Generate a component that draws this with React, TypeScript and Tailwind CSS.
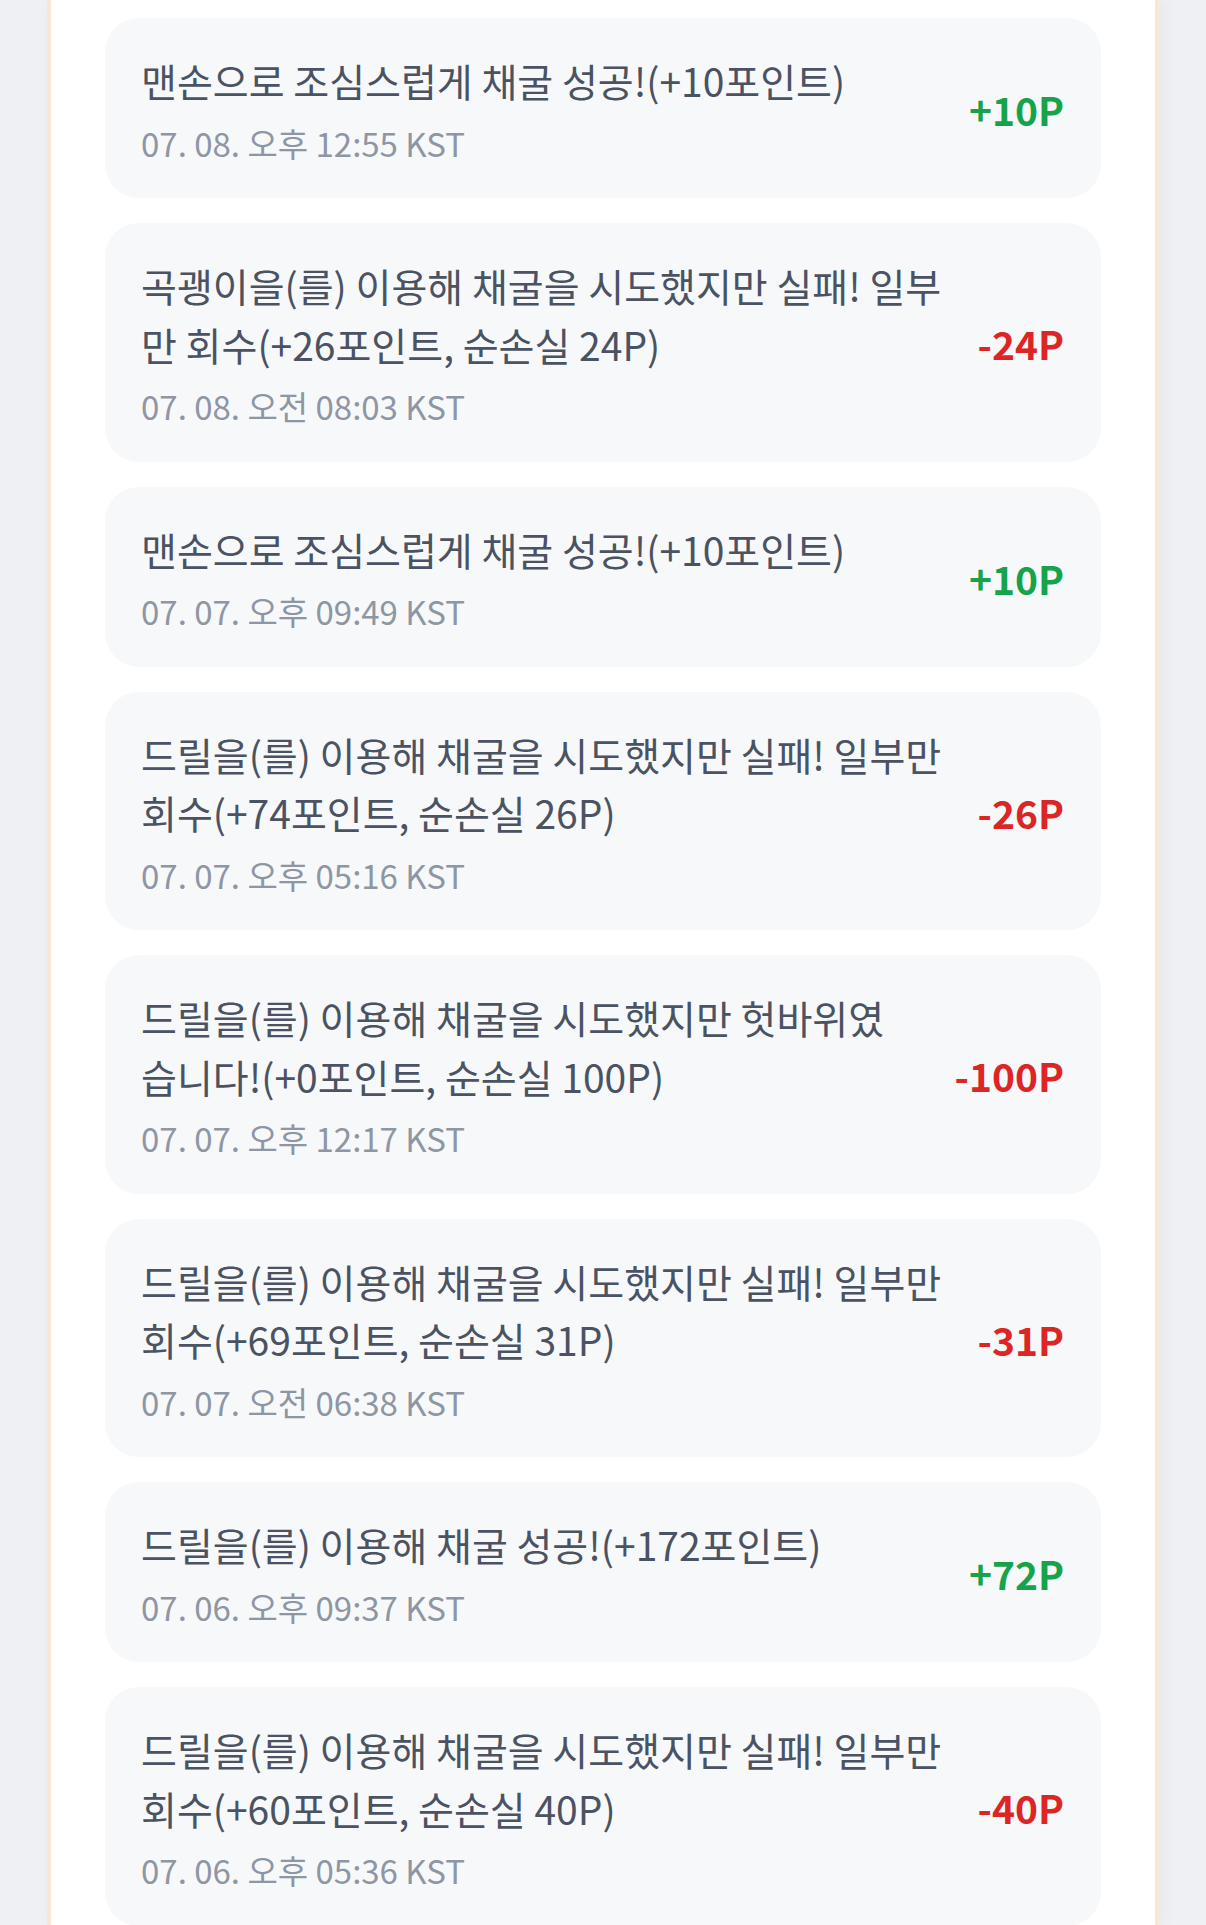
import React from "react";

type Entry = {
  message: string;
  time: string;
  delta: number;
};

const entries: Entry[] = [
  { message: "맨손으로 조심스럽게 채굴 성공!(+10포인트)", time: "07. 08. 오후 12:55 KST", delta: 10 },
  { message: "곡괭이을(를) 이용해 채굴을 시도했지만 실패! 일부만 회수(+26포인트, 순손실 24P)", time: "07. 08. 오전 08:03 KST", delta: -24 },
  { message: "맨손으로 조심스럽게 채굴 성공!(+10포인트)", time: "07. 07. 오후 09:49 KST", delta: 10 },
  { message: "드릴을(를) 이용해 채굴을 시도했지만 실패! 일부만 회수(+74포인트, 순손실 26P)", time: "07. 07. 오후 05:16 KST", delta: -26 },
  { message: "드릴을(를) 이용해 채굴을 시도했지만 헛바위였습니다!(+0포인트, 순손실 100P)", time: "07. 07. 오후 12:17 KST", delta: -100 },
  { message: "드릴을(를) 이용해 채굴을 시도했지만 실패! 일부만 회수(+69포인트, 순손실 31P)", time: "07. 07. 오전 06:38 KST", delta: -31 },
  { message: "드릴을(를) 이용해 채굴 성공!(+172포인트)", time: "07. 06. 오후 09:37 KST", delta: 72 },
  { message: "드릴을(를) 이용해 채굴을 시도했지만 실패! 일부만 회수(+60포인트, 순손실 40P)", time: "07. 06. 오후 05:36 KST", delta: -40 },
];

function HistoryItem({ entry }: { entry: Entry }) {
  const positive = entry.delta > 0;
  return (
    <div className="flex items-center gap-[36px] rounded-[34px] bg-[#f7f8fa] pl-[36px] pr-[37px] pt-[33px] pb-[30px]">
      <div className="min-w-0 flex-1">
        <p className="text-[39px] leading-[58.5px] text-[#4b5262]">{entry.message}</p>
        <p className="mt-[9px] text-[33px] leading-[49.5px] text-[#8e96a3]">{entry.time}</p>
      </div>
      <span
        className={
          positive
            ? "shrink-0 text-[39px] font-bold leading-none text-[#16a34a]"
            : "shrink-0 text-[39px] font-bold leading-none text-[#dc2626]"
        }
      >
        {positive ? `+${entry.delta}P` : `${entry.delta}P`}
      </span>
    </div>
  );
}

export default function App() {
  return (
    <div
      className="h-[1925px] overflow-hidden bg-[#eef0f4] px-[47px]"
      style={{ fontFamily: '"Noto Sans CJK KR", "Noto Sans", sans-serif' }}
    >
      <div className="h-full border-x-[4px] border-[#f7e8d4] bg-white px-[54px] pt-[18px] shadow-[4px_0_16px_rgba(0,0,0,0.04)]">
        <div className="flex flex-col gap-[25px]">
          {entries.map((e, i) => (
            <HistoryItem key={i} entry={e} />
          ))}
        </div>
      </div>
    </div>
  );
}
